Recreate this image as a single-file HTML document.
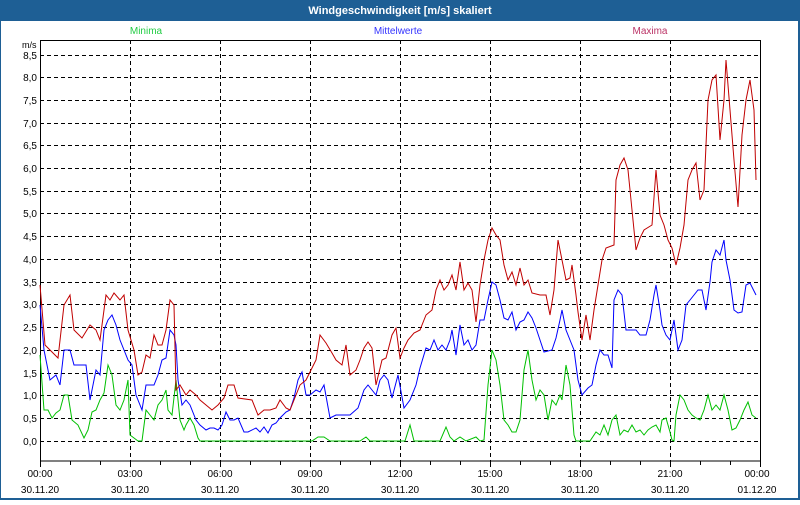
<!DOCTYPE html>
<html><head><meta charset="utf-8"><style>
body{margin:0;width:800px;height:500px;overflow:hidden;background:#fff;font-family:"Liberation Sans",Verdana,sans-serif}
</style></head><body>
<svg width="800" height="500" xmlns="http://www.w3.org/2000/svg" font-family="Liberation Sans, sans-serif" font-size="10">
<rect x="0" y="0" width="800" height="500" fill="#1e5f95"/>
<rect x="1" y="21" width="797" height="477" fill="#fff"/>
<text x="400" y="14" fill="#fff" font-weight="bold" font-size="11" text-anchor="middle">Windgeschwindigkeit [m/s] skaliert</text>
<text x="146" y="34" fill="#22cc44" text-anchor="middle">Minima</text>
<text x="398" y="34" fill="#3333ff" text-anchor="middle">Mittelwerte</text>
<text x="650" y="34" fill="#bb3366" text-anchor="middle">Maxima</text>
<text x="22" y="48" fill="#000" font-size="9">m/s</text>
<g stroke="#000" stroke-dasharray="4,3" stroke-width="1" fill="none">
<path d="M40 441.5H760M40 418.5H760M40 395.5H760M40 373.5H760M40 350.5H760M40 327.5H760M40 304.5H760M40 282.5H760M40 259.5H760M40 236.5H760M40 213.5H760M40 191.5H760M40 168.5H760M40 145.5H760M40 123.5H760M40 100.5H760M40 77.5H760M40 55.5H760"/>
<path d="M130.5 40V461M220.5 40V461M310.5 40V461M400.5 40V461M490.5 40V461M580.5 40V461M670.5 40V461"/>
</g>
<rect x="40.5" y="40.5" width="720" height="420.5" fill="none" stroke="#000"/>
<g stroke="#000"><path d="M40.5 461V467M70.5 461V465M100.5 461V465M130.5 461V467M160.5 461V465M190.5 461V465M220.5 461V467M250.5 461V465M280.5 461V465M310.5 461V467M340.5 461V465M370.5 461V465M400.5 461V467M430.5 461V465M460.5 461V465M490.5 461V467M520.5 461V465M550.5 461V465M580.5 461V467M610.5 461V465M640.5 461V465M670.5 461V467M700.5 461V465M730.5 461V465M760.5 461V467"/></g>
<g fill="#000" text-anchor="end">
<text x="37" y="445">0,0</text><text x="37" y="422">0,5</text><text x="37" y="399">1,0</text><text x="37" y="377">1,5</text><text x="37" y="354">2,0</text><text x="37" y="331">2,5</text><text x="37" y="308">3,0</text><text x="37" y="286">3,5</text><text x="37" y="263">4,0</text><text x="37" y="240">4,5</text><text x="37" y="217">5,0</text><text x="37" y="195">5,5</text><text x="37" y="172">6,0</text><text x="37" y="149">6,5</text><text x="37" y="127">7,0</text><text x="37" y="104">7,5</text><text x="37" y="81">8,0</text><text x="37" y="59">8,5</text>
</g>
<g fill="#000" text-anchor="middle">
<text x="40" y="477">00:00</text><text x="130" y="477">03:00</text><text x="220" y="477">06:00</text><text x="310" y="477">09:00</text><text x="400" y="477">12:00</text><text x="490" y="477">15:00</text><text x="580" y="477">18:00</text><text x="670" y="477">21:00</text><text x="757" y="477">00:00</text>
<text x="40" y="493">30.11.20</text><text x="130" y="493">30.11.20</text><text x="220" y="493">30.11.20</text><text x="310" y="493">30.11.20</text><text x="400" y="493">30.11.20</text><text x="490" y="493">30.11.20</text><text x="580" y="493">30.11.20</text><text x="670" y="493">30.11.20</text><text x="757" y="493">01.12.20</text>
</g>
<g fill="none" stroke-width="1">
<polyline stroke="#00c000" points="40,355 44,410 48,410 52,418 56,413 60,410 64,395 68,395 72,420 78,425 84,438 88,430 92,412 96,410 100,400 104,393 108,365 112,375 116,405 120,410 124,400 128,380 130,435 134,438 138,441 142,441 146,410 150,415 154,420 158,405 162,400 166,390 168,410 172,415 176,380 180,420 184,430 186,425 190,418 194,425 198,438 200,441 312,441 318,437 324,437 330,441 360,441 366,437 370,441 405,441 410,425 414,441 440,441 446,427 450,437 454,441 460,437 466,441 476,437 480,441 484,440 488,385 492,350 496,360 500,385 504,420 508,425 512,432 516,432 520,420 524,370 528,350 532,380 536,400 540,390 544,395 548,420 552,400 556,405 560,395 562,400 566,365 570,385 574,435 576,441 590,441 596,432 600,435 604,425 608,435 612,420 616,415 620,435 624,430 628,432 632,425 636,432 640,430 644,435 648,430 652,427 656,425 660,432 662,420 666,418 670,432 672,440 674,441 676,415 680,395 684,400 688,410 692,415 696,418 700,420 704,410 708,395 712,410 716,405 720,410 724,395 728,410 732,430 736,428 740,420 744,410 748,402 752,415 756,418"/>
<polyline stroke="#0000ff" points="40,305 44,350 50,380 56,375 60,385 64,350 70,350 74,365 80,365 86,365 90,400 96,370 100,375 104,330 108,320 112,315 116,325 120,340 124,350 128,360 132,365 136,395 142,410 146,385 154,385 158,375 162,360 166,358 170,330 174,335 176,345 178,380 182,405 186,400 190,405 196,420 200,425 206,430 210,428 214,428 218,430 222,425 226,412 230,420 234,420 238,418 244,432 248,432 256,428 260,432 264,427 268,433 272,425 276,423 280,418 286,412 290,410 294,398 298,380 302,372 306,395 310,395 316,390 320,392 324,385 330,418 336,415 350,415 358,408 364,390 368,385 372,390 376,395 380,380 384,375 388,380 392,398 398,375 404,408 410,400 416,385 420,368 426,348 430,350 434,340 438,350 442,345 446,350 450,340 452,330 456,355 460,325 464,345 468,340 472,350 476,345 480,320 484,320 488,300 492,282 496,285 500,300 504,318 508,320 512,312 516,330 520,322 524,320 528,312 532,318 536,328 540,340 544,352 552,350 556,338 560,320 562,310 566,330 570,340 574,350 578,380 582,395 588,388 592,385 596,365 600,350 604,355 608,355 612,368 614,300 618,290 622,295 626,330 636,330 640,335 646,335 650,320 654,295 656,285 660,310 662,325 666,335 670,340 674,320 678,350 682,340 686,305 690,300 694,295 698,290 702,290 706,310 710,282 712,262 716,250 720,255 724,240 726,260 730,280 734,310 738,313 742,312 746,285 750,283 756,295"/>
<polyline stroke="#c00000" points="40,285 45,345 50,350 58,358 64,305 70,295 74,330 82,338 90,325 96,330 100,340 106,295 110,300 114,293 120,300 124,295 128,330 134,350 138,375 142,372 146,355 150,358 154,335 158,345 162,345 166,330 170,300 174,305 176,390 180,385 186,395 190,390 196,395 200,400 206,405 212,410 218,405 224,398 228,385 234,385 238,398 252,400 258,415 264,410 270,410 276,408 280,400 286,408 290,410 296,395 300,385 306,380 312,368 316,360 320,335 326,343 332,353 336,360 342,365 346,345 350,375 356,370 360,360 364,348 368,342 372,348 376,385 382,360 386,358 392,335 396,328 400,358 404,348 408,340 414,333 420,330 426,315 432,310 436,290 440,280 444,290 448,285 452,275 456,290 460,262 464,290 468,283 472,290 476,322 480,285 484,260 488,240 492,228 496,235 500,240 504,265 508,280 512,272 516,285 520,268 524,285 528,280 532,293 540,295 546,295 550,315 554,290 556,265 558,240 562,260 566,280 570,278 572,265 576,295 578,312 582,340 586,315 590,340 594,310 598,285 602,260 606,248 614,245 616,180 620,165 624,158 628,170 632,210 636,250 640,238 644,230 652,225 656,170 660,215 664,225 668,240 672,248 676,265 680,248 684,225 688,180 692,170 696,163 700,200 704,190 708,100 712,80 716,75 720,140 724,100 726,60 730,110 734,160 738,207 742,135 746,100 750,80 754,110 756,180"/>
</g>
</svg>
</body></html>
